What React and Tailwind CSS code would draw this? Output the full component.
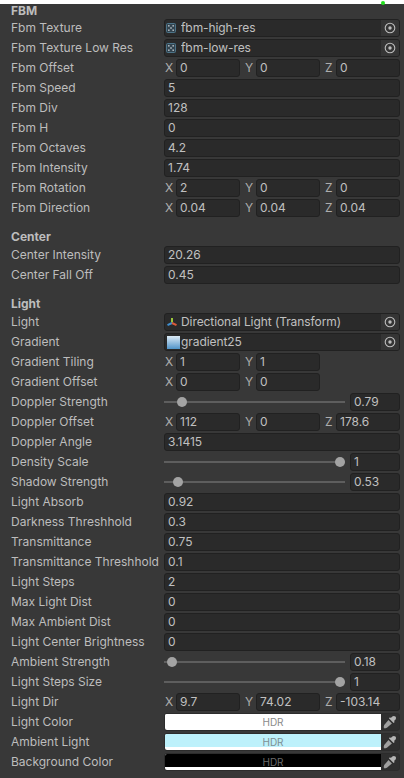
const labelCls = "w-[153px] shrink-0 truncate text-[#bdbdbd]";
const fieldCls = "h-[18px] flex items-center rounded-[3px] border border-[#212121] bg-[#2a2a2a] text-[#c0c0c0] overflow-hidden";

const Row = ({ label, children }) => (
  <div className="h-5 flex items-center pl-[11px] pr-1">
    <div className={labelCls}>{label}</div>
    <div className="flex-1 min-w-0 flex items-center">{children}</div>
  </div>
);

const Header = ({ children, className }) => (
  <div className={`h-[14px] pl-[11px] flex items-center font-bold text-[#bdbdbd] ${className}`}>{children}</div>
);

const Target = () => (
  <div className="ml-auto w-[18px] h-full flex items-center justify-center bg-[#353535]">
    <svg width="12" height="12" viewBox="0 0 12 12">
      <circle cx="6" cy="6" r="4.8" fill="none" stroke="#bdbdbd" strokeWidth="1.1" />
      <circle cx="6" cy="6" r="1.7" fill="#bdbdbd" />
    </svg>
  </div>
);

const TextureIcon = () => (
  <div className="w-4 shrink-0 flex items-center">
    <svg width="10" height="10" viewBox="0 0 10 10" className="ml-[1px]">
      <rect x="0.5" y="0.5" width="9" height="9" rx="1" fill="#33444f" stroke="#4d7488" />
      <g fill="#a9b3b9">
        <rect x="2" y="2" width="1.6" height="1.6" />
        <rect x="6.4" y="2" width="1.6" height="1.6" />
        <rect x="4.2" y="4.2" width="1.6" height="1.6" />
        <rect x="2" y="6.4" width="1.6" height="1.6" />
        <rect x="6.4" y="6.4" width="1.6" height="1.6" />
      </g>
    </svg>
  </div>
);

const LightIcon = () => (
  <div className="w-4 shrink-0 flex items-center">
    <svg width="12" height="12" viewBox="0 0 12 12" className="ml-[1px]">
      <path d="M6 2V6.5" stroke="#9bc63c" strokeWidth="2" />
      <path d="M6 7L1.5 9.2" stroke="#3f8fd0" strokeWidth="2" />
      <path d="M6 7L10.5 9.2" stroke="#dc5b3a" strokeWidth="2" />
    </svg>
  </div>
);

const GradientIcon = () => (
  <div className="w-4 shrink-0 flex items-center">
    <div className="ml-[2px] w-[13px] h-[13px] bg-gradient-to-b from-[#dcebf5] to-[#4f94c9]" />
  </div>
);

const ObjectField = ({ icon, text }) => (
  <div className={`${fieldCls} w-full`}>
    {icon}
    <span className="truncate tracking-[-0.08px]">{text}</span>
    <Target />
  </div>
);

const Num = ({ value }) => (
  <div className={`${fieldCls} w-full px-[3px]`}>{value}</div>
);

const Vec = ({ values }) => (
  <div className="w-full flex gap-1">
    {values.map(([axis, value]) => (
      <div key={axis} className="w-[76px] flex items-center">
        <span className="w-3 shrink-0 pl-[1px] text-[#adadad]">{axis}</span>
        <div className={`${fieldCls} w-16 px-[3px]`}>{value}</div>
      </div>
    ))}
  </div>
);

const Slider = ({ x, value }) => (
  <div className="w-full flex items-center gap-[5px]">
    <div className="relative flex-1 h-[2px] bg-[#5e5e5e]">
      <div className="absolute top-[-4px] w-[10px] h-[10px] rounded-full bg-[#a3a3a3]" style={{ left: x }} />
    </div>
    <div className={`${fieldCls} w-[50px] px-[3px]`}>{value}</div>
  </div>
);

const Color = ({ swatch, text }) => (
  <div className="w-full h-[18px] flex items-center rounded-[3px] border border-[#2c2c2c] bg-[#2f2f2f] overflow-hidden">
    <div className="relative w-[216px] h-full bg-white">
      <div className={`h-[13px] ${swatch}`} />
      <div className={`absolute inset-0 flex items-center justify-center text-[10px] ${text}`}>HDR</div>
    </div>
    <div className="flex-1 flex items-center justify-center">
      <svg width="14" height="14" viewBox="0 0 14 14">
        <path d="M9.3 1.6C10.2.7 11.5.8 12.4 1.6C13.2 2.5 13.3 3.8 12.4 4.7L11 6.1L11.7 6.9L10.6 8L5.9 3.3L7 2.2L7.8 3Z" fill="#b5b5b5" />
        <path d="M5.5 5L8.9 8.4L3.9 12.8L1.7 13.4L.6 12.3L1.2 10.1Z" fill="#a0a0a0" />
      </svg>
    </div>
  </div>
);

export default function App() {
  return (
    <div className="w-[404px] h-[778px] bg-[#383838] text-[12px] leading-[18px] font-['Inter',sans-serif] overflow-hidden">
      <div className="relative h-1 bg-white">
        <div className="absolute left-[381px] top-[1px] w-[4px] h-[4px] rounded-full bg-[#22e01e]" />
      </div>

      <Header>FBM</Header>
      <Row label="Fbm Texture"><ObjectField icon={<TextureIcon />} text="fbm-high-res" /></Row>
      <Row label="Fbm Texture Low Res"><ObjectField icon={<TextureIcon />} text="fbm-low-res" /></Row>
      <Row label="Fbm Offset"><Vec values={[["X", "0"], ["Y", "0"], ["Z", "0"]]} /></Row>
      <Row label="Fbm Speed"><Num value="5" /></Row>
      <Row label="Fbm Div"><Num value="128" /></Row>
      <Row label="Fbm H"><Num value="0" /></Row>
      <Row label="Fbm Octaves"><Num value="4.2" /></Row>
      <Row label="Fbm Intensity"><Num value="1.74" /></Row>
      <Row label="Fbm Rotation"><Vec values={[["X", "2"], ["Y", "0"], ["Z", "0"]]} /></Row>
      <Row label="Fbm Direction"><Vec values={[["X", "0.04"], ["Y", "0.04"], ["Z", "0.04"]]} /></Row>

      <Header className="mt-3 mb-px">Center</Header>
      <Row label="Center Intensity"><Num value="20.26" /></Row>
      <Row label="Center Fall Off"><Num value="0.45" /></Row>

      <Header className="mt-3 mb-[1px]">Light</Header>
      <Row label="Light"><ObjectField icon={<LightIcon />} text="Directional Light (Transform)" /></Row>
      <Row label="Gradient"><ObjectField icon={<GradientIcon />} text="gradient25" /></Row>
      <Row label="Gradient Tiling"><Vec values={[["X", "1"], ["Y", "1"]]} /></Row>
      <Row label="Gradient Offset"><Vec values={[["X", "0"], ["Y", "0"]]} /></Row>
      <Row label="Doppler Strength"><Slider x={13} value="0.79" /></Row>
      <Row label="Doppler Offset"><Vec values={[["X", "112"], ["Y", "0"], ["Z", "178.6"]]} /></Row>
      <Row label="Doppler Angle"><Num value="3.1415" /></Row>
      <Row label="Density Scale"><Slider x={171} value="1" /></Row>
      <Row label="Shadow Strength"><Slider x={9} value="0.53" /></Row>
      <Row label="Light Absorb"><Num value="0.92" /></Row>
      <Row label="Darkness Threshhold"><Num value="0.3" /></Row>
      <Row label="Transmittance"><Num value="0.75" /></Row>
      <Row label="Transmittance Threshhold"><Num value="0.1" /></Row>
      <Row label="Light Steps"><Num value="2" /></Row>
      <Row label="Max Light Dist"><Num value="0" /></Row>
      <Row label="Max Ambient Dist"><Num value="0" /></Row>
      <Row label="Light Center Brightness"><Num value="0" /></Row>
      <Row label="Ambient Strength"><Slider x={3} value="0.18" /></Row>
      <Row label="Light Steps Size"><Slider x={171} value="1" /></Row>
      <Row label="Light Dir"><Vec values={[["X", "9.7"], ["Y", "74.02"], ["Z", "-103.14"]]} /></Row>
      <Row label="Light Color"><Color swatch="bg-white" text="text-[#8a8a8a]" /></Row>
      <Row label="Ambient Light"><Color swatch="bg-[#bdf1fb]" text="text-[#7d8f93]" /></Row>
      <Row label="Background Color"><Color swatch="bg-black" text="text-[#6a6a6a]" /></Row>
    </div>
  );
}
